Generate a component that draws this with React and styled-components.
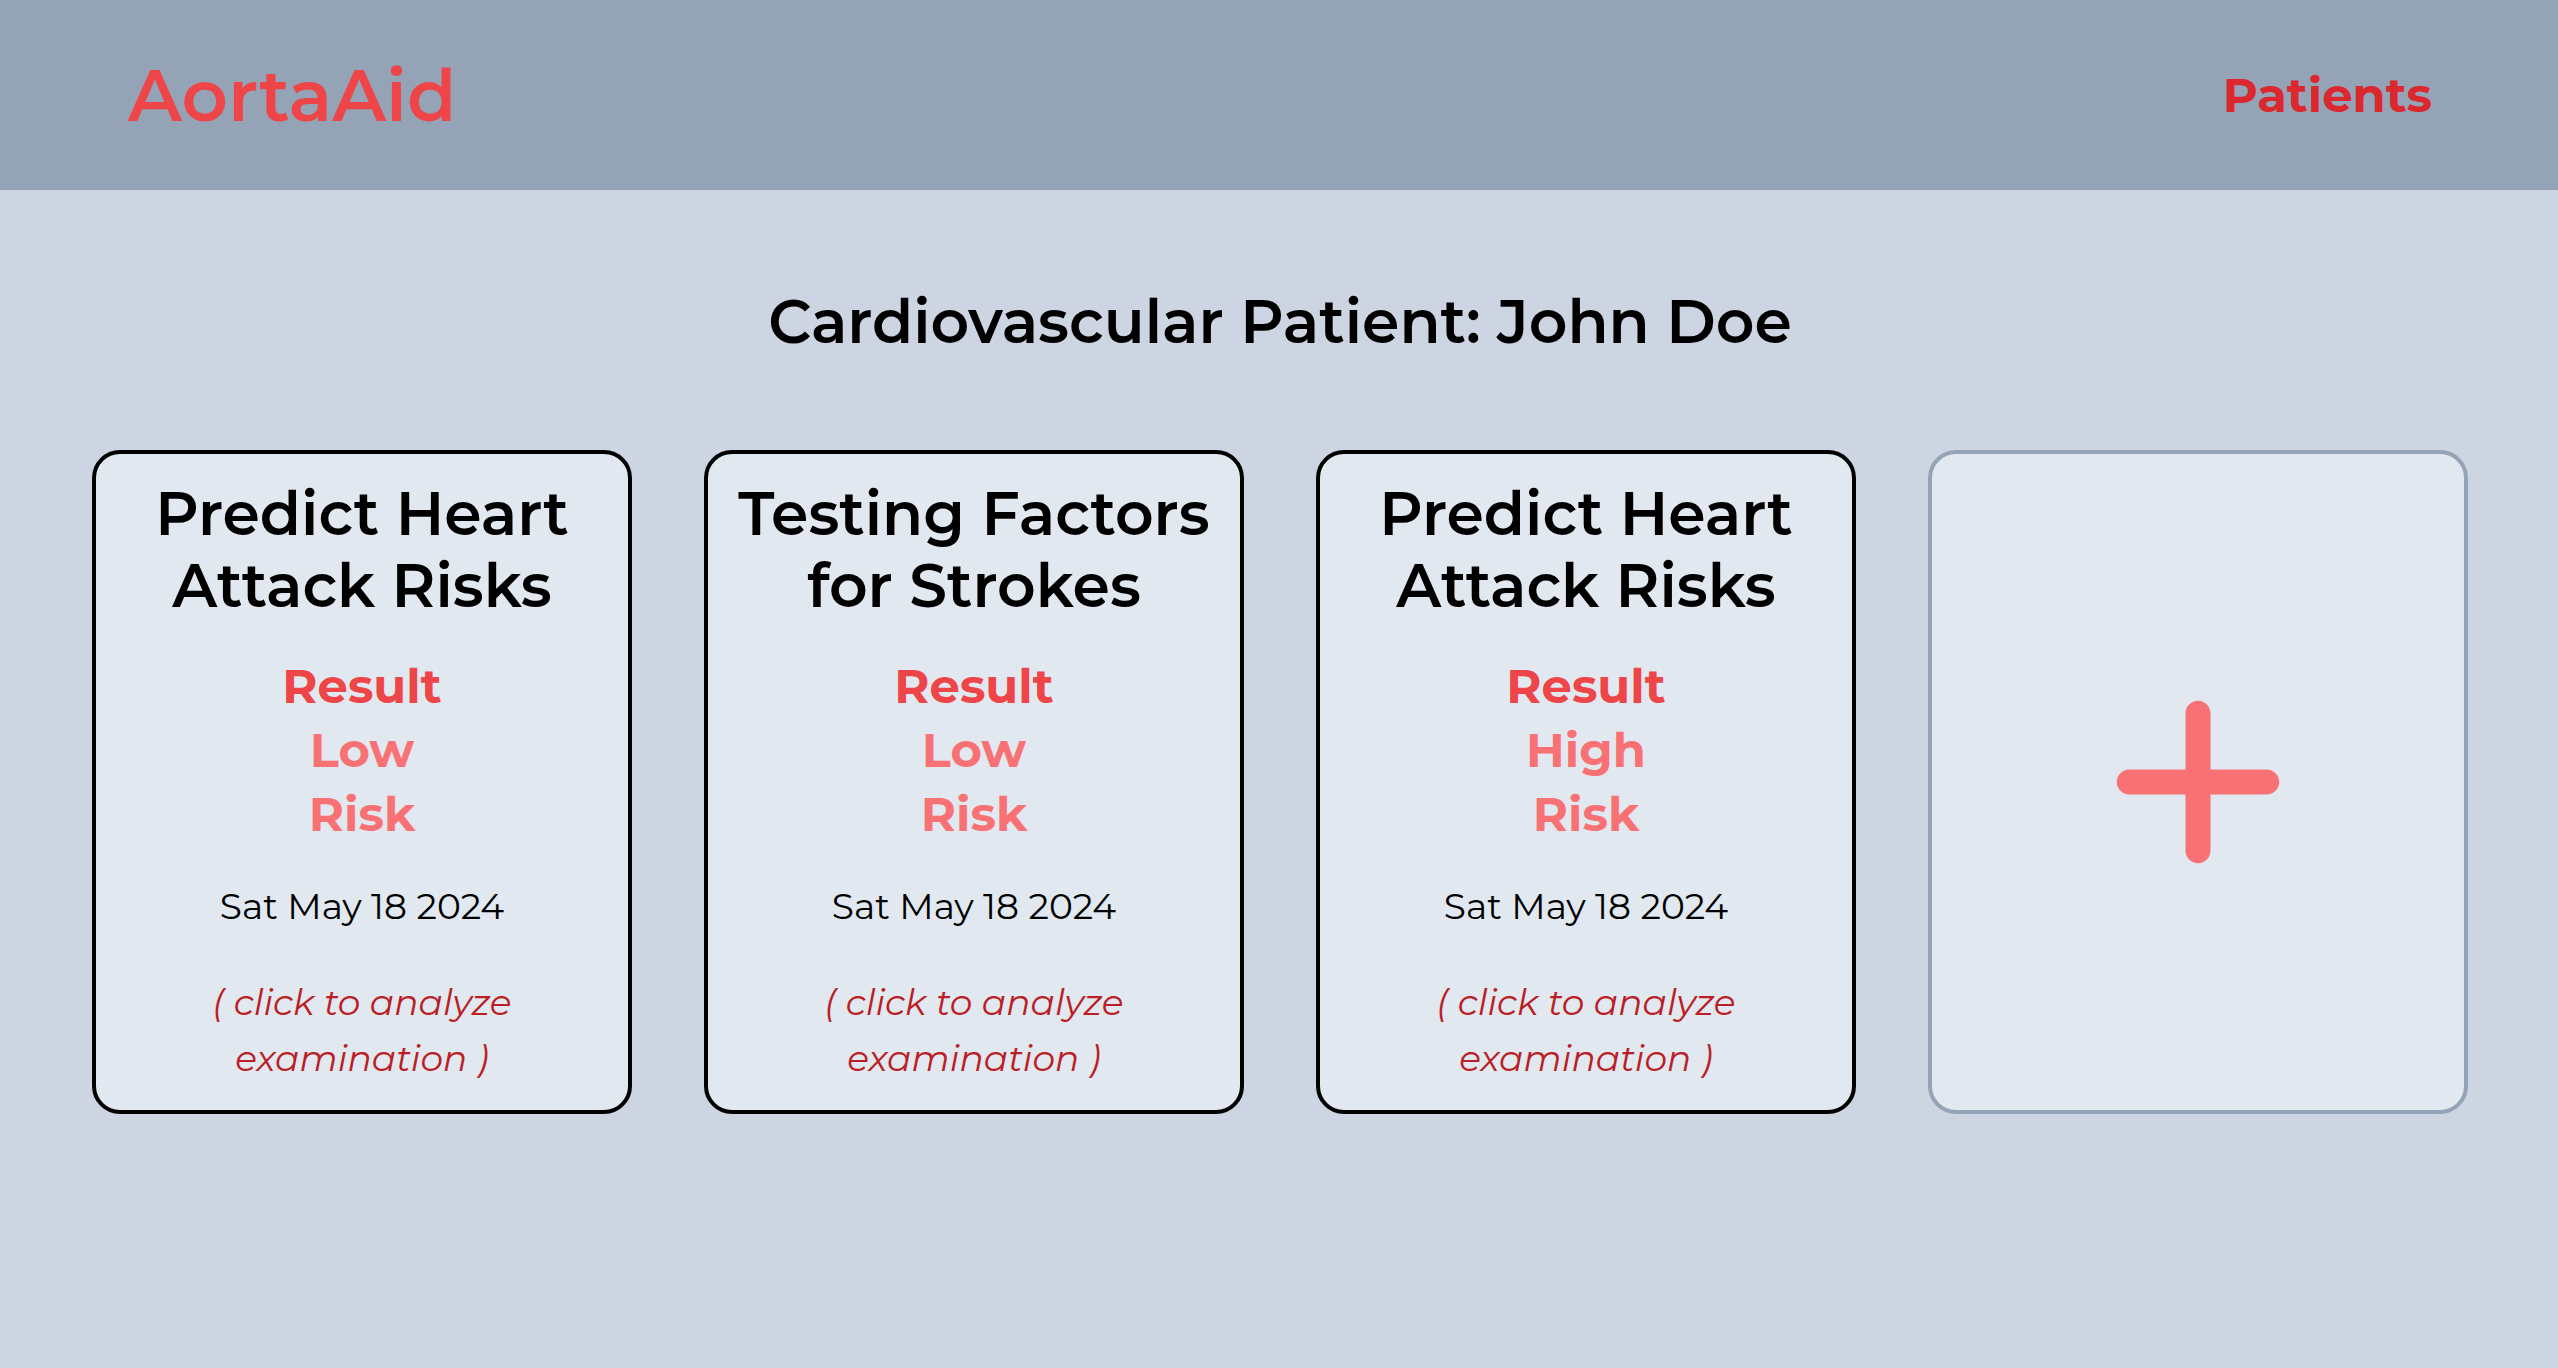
import React from "react";
import styled, { createGlobalStyle } from "styled-components";
import { FaPlus } from "react-icons/fa6";

const GlobalStyle = createGlobalStyle`
  *, *::before, *::after { box-sizing: border-box; }
  body {
    margin: 0;
    background: #cdd4e2;
    color: #000;
    font-family: Montserrat, Inter, sans-serif;
  }
  h1, h2, p { margin: 0; }
`;

const Header = styled.header`
  display: flex;
  align-items: center;
  justify-content: space-between;
  min-height: 190px;
  padding: 0 126px 0 128px;
  background: #95a3b7;
`;

const Brand = styled.a`
  color: #ee4648;
  font-size: 72px;
  font-weight: 600;
  line-height: 88px;
  text-decoration: none;
`;

const NavLink = styled.a`
  color: #db282e;
  font-size: 48px;
  font-weight: 700;
  line-height: 64px;
  text-decoration: none;
`;

const Main = styled.main`
  display: flex;
  flex-direction: column;
  gap: 92px;
  padding: 96px 90px 96px 92px;
`;

const PageTitle = styled.h1`
  font-size: 60px;
  font-weight: 600;
  line-height: 72px;
  text-align: center;
`;

const Cards = styled.div`
  display: grid;
  grid-template-columns: repeat(4, 1fr);
  gap: 72px;
`;

const Card = styled.button`
  display: flex;
  flex-direction: column;
  align-items: center;
  justify-content: ${(p) => (p.$add ? "center" : "flex-start")};
  gap: 32px;
  padding: 24px;
  border: 4px solid ${(p) => (p.$add ? "#95a3b7" : "#000")};
  border-radius: 28px;
  background: #e1e8f0;
  color: ${(p) => (p.$add ? "#f87275" : "#000")};
  font-family: inherit;
  text-align: center;
  cursor: pointer;
`;

const CardTitle = styled.span`
  font-size: 60px;
  font-weight: 600;
  line-height: 72px;
`;

const Result = styled.span`
  display: flex;
  flex-direction: column;
  color: #ee4648;
  font-size: 48px;
  font-weight: 700;
  line-height: 64px;
`;

const Outcome = styled.span`
  display: flex;
  flex-direction: column;
  color: #f87275;
`;

const ExamDate = styled.span`
  font-size: 36px;
  line-height: 56px;
`;

const Hint = styled.span`
  max-width: 400px;
  padding-top: 8px;
  color: #bb1e24;
  font-size: 36px;
  font-style: italic;
  line-height: 56px;
`;

const exams = [
  { id: 1, title: "Predict Heart Attack Risks", level: "Low" },
  { id: 2, title: "Testing Factors for Strokes", level: "Low" },
  { id: 3, title: "Predict Heart Attack Risks", level: "High" },
];

function ExamCard({ title, level }) {
  return (
    <Card type="button">
      <CardTitle>{title}</CardTitle>
      <Result>
        Result
        <Outcome>
          <span>{level}</span>
          <span>Risk</span>
        </Outcome>
      </Result>
      <ExamDate>Sat May 18 2024</ExamDate>
      <Hint>( click to analyze examination )</Hint>
    </Card>
  );
}

export default function App() {
  return (
    <>
      <GlobalStyle />
      <Header>
        <Brand href="#">AortaAid</Brand>
        <nav>
          <NavLink href="#patients">Patients</NavLink>
        </nav>
      </Header>
      <Main>
        <PageTitle>Cardiovascular Patient: John Doe</PageTitle>
        <Cards>
          {exams.map((exam) => (
            <ExamCard key={exam.id} title={exam.title} level={exam.level} />
          ))}
          <Card type="button" $add aria-label="Add examination">
            <FaPlus size={200} />
          </Card>
        </Cards>
      </Main>
    </>
  );
}
